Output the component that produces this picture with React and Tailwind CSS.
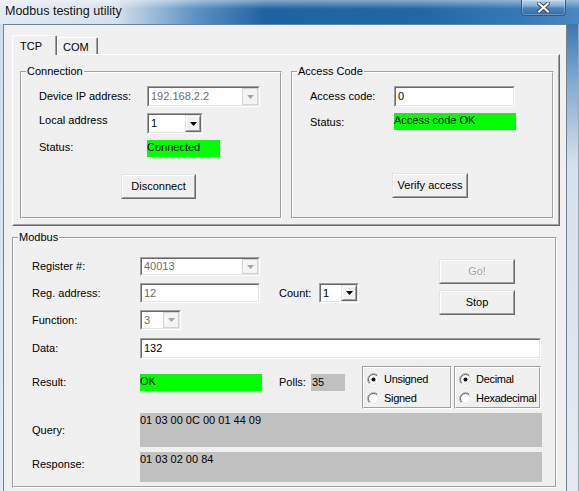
import React from "react";

const Arrow = ({ color = "#000" }) => (
  <svg width="7" height="4" viewBox="0 0 7 4">
    <path d="M0 0H7L3.5 4Z" fill={color} />
  </svg>
);

function Raised({ className = "", innerClassName = "", children }) {
  return (
    <div className={"border border-t-[#e3e3e3] border-l-[#e3e3e3] border-b-[#696969] border-r-[#696969] " + className}>
      <div className={"w-full h-full border border-t-white border-l-white border-b-[#a0a0a0] border-r-[#a0a0a0] bg-[#f0f0f0] flex items-center justify-center " + innerClassName}>
        {children}
      </div>
    </div>
  );
}

function Sunken({ className = "", innerClassName = "", children }) {
  return (
    <div className={"border border-t-[#a0a0a0] border-l-[#a0a0a0] border-b-white border-r-white " + className}>
      <div className={"w-full h-full border border-t-[#696969] border-l-[#696969] border-b-[#e3e3e3] border-r-[#e3e3e3] bg-white " + innerClassName}>
        {children}
      </div>
    </div>
  );
}

function Etched({ className = "", innerClassName = "", legend, children }) {
  return (
    <div className={"relative border border-t-[#a0a0a0] border-l-[#a0a0a0] border-b-white border-r-white " + className}>
      <div className={"w-full h-full border border-t-white border-l-white border-b-[#a0a0a0] border-r-[#a0a0a0] " + innerClassName}>
        {children}
      </div>
      {legend && (
        <span className="absolute left-[5px] top-[-7px] px-[1px] bg-[#f0f0f0] leading-[13px]">{legend}</span>
      )}
    </div>
  );
}

function Combo({ className = "", value, disabled }) {
  return (
    <Sunken className={className} innerClassName="flex">
      <div className={"flex-1 pl-[2px] flex items-center " + (disabled ? "text-[#6d6d6d]" : "text-black")}>{value}</div>
      {disabled ? (
        <div className="w-[16px] h-full border border-[#d4d4d4] bg-[#f4f4f4] flex items-center justify-center">
          <Arrow color="#a6a6a6" />
        </div>
      ) : (
        <Raised className="w-[16px] h-full">
          <Arrow />
        </Raised>
      )}
    </Sunken>
  );
}

function Edit({ className = "", value, disabled }) {
  return (
    <Sunken className={className} innerClassName={"flex items-center pl-[2px] " + (disabled ? "text-[#6d6d6d]" : "text-black")}>
      {value}
    </Sunken>
  );
}

function Radio({ checked }) {
  return (
    <svg width="13" height="13" viewBox="0 0 13 13" className="shrink-0">
      <circle cx="6.5" cy="6.5" r="4.5" fill="#fff" />
      <path d="M2.26 10.74A6 6 0 0 1 10.74 2.26" fill="none" stroke="#a0a0a0" strokeWidth="1" />
      <path d="M10.74 2.26A6 6 0 0 1 2.26 10.74" fill="none" stroke="#ffffff" strokeWidth="1" />
      <path d="M2.96 10.04A5 5 0 0 1 10.04 2.96" fill="none" stroke="#696969" strokeWidth="1" />
      <path d="M10.04 2.96A5 5 0 0 1 2.96 10.04" fill="none" stroke="#e3e3e3" strokeWidth="1" />
      {checked && <circle cx="6.5" cy="6.5" r="2" fill="#000" />}
    </svg>
  );
}

function RadioGroup({ className = "", items }) {
  return (
    <Etched className={className}>
      <div className="flex flex-col gap-[6px] pl-[3px] pt-[5px]">
        {items.map(([label, checked]) => (
          <div key={label} className="flex items-center gap-[4px] h-[13px]">
            <Radio checked={checked} />
            <span className="tracking-[-0.3px] whitespace-nowrap">{label}</span>
          </div>
        ))}
      </div>
    </Etched>
  );
}

function CloseButton() {
  return (
    <div className="mr-[13px] w-[45px] h-[16px] rounded-b-[4px] border border-t-0 border-[#365a7e] bg-[linear-gradient(180deg,#bcd6ed_0%,#8db4da_35%,#4b84bc_55%,#2f6ead_100%)] shadow-[inset_0_0_0_1px_rgba(255,255,255,0.25)] flex items-center justify-center">
      <svg width="13" height="11" viewBox="0 0 13 11">
        <path d="M2 1.5L11 9.5M11 1.5L2 9.5" stroke="#3f4a58" strokeWidth="4" strokeLinecap="square" />
        <path d="M2 1.5L11 9.5M11 1.5L2 9.5" stroke="#ffffff" strokeWidth="2" strokeLinecap="square" />
      </svg>
    </div>
  );
}

export default function App() {
  return (
    <div className="w-[579px] h-[491px] overflow-hidden font-['Liberation_Sans',Arial,sans-serif] text-[11px] leading-[13px] text-black bg-[#dfe8f1]">
      {/* title bar */}
      <div className="relative h-[24px] flex items-center bg-[linear-gradient(90deg,#e2eaf2_0%,#d3e0ec_20%,#5b90c2_34%,#1f62a1_46%,#2366a4_72%,#3579b6_90%,#4a88c0_100%)]">
        <div className="absolute inset-x-0 top-0 h-[9px] bg-[linear-gradient(180deg,rgba(255,255,255,0.45),rgba(255,255,255,0))]" />
        <span className="relative pl-[5px] pb-[2px] text-[12.5px] leading-[16px] text-[#111] [text-shadow:0_0_6px_rgba(255,255,255,0.95)]">
          Modbus testing utility
        </span>
        <div className="relative ml-auto flex self-start">
          <CloseButton />
        </div>
      </div>

      <div className="flex h-[467px]">
        <div className="w-[3px] bg-[linear-gradient(180deg,#cfdeec,#e4ebf2)]" />

        {/* client area */}
        <div className="w-[564px] border-t border-l border-r border-[#6f8398] bg-[#f0f0f0] flex flex-col">
          {/* tabs */}
          <div className="mt-[10px] ml-[8px] h-[19px] flex items-end">
            <div className="relative z-10 -mb-[1px] w-[45px] h-[20px] rounded-t-[2px] border-t border-l border-r border-t-white border-l-white border-r-[#696969] bg-[#f0f0f0]">
              <div className="h-full border-r border-r-[#a0a0a0] pl-[7px] pt-[4px]">TCP</div>
            </div>
            <div className="w-[41px] h-[17px] rounded-t-[2px] border-t border-l border-r border-t-white border-l-white border-r-[#696969] bg-[#f0f0f0]">
              <div className="h-full border-r border-r-[#a0a0a0] pl-[5px] pt-[3px]">COM</div>
            </div>
          </div>

          {/* tab page */}
          <div className="ml-[8px] w-[548px] h-[172px] border border-t-white border-l-white border-b-[#696969] border-r-[#696969]">
            <div className="w-full h-full border border-t-[#f0f0f0] border-l-[#f0f0f0] border-b-[#a0a0a0] border-r-[#a0a0a0] flex pl-[6px] pt-[15px]">
              {/* Connection */}
              <Etched className="w-[262px] h-[148px]" legend="Connection">
                <div className="flex flex-col pl-[17px] pt-[13px]">
                  <div className="flex items-center h-[21px]">
                    <span className="w-[108px]">Device IP address:</span>
                    <Combo className="w-[113px] h-[21px]" value="192.168.2.2" disabled />
                  </div>
                  <div className="flex items-start h-[21px] mt-[6px]">
                    <span className="w-[108px] pt-[1px]">Local address</span>
                    <Combo className="w-[56px] h-[21px]" value="1" />
                  </div>
                  <div className="flex items-start h-[17px] mt-[6px]">
                    <span className="w-[108px] pt-[1px]">Status:</span>
                    <div className="w-[73px] h-[17px] bg-[#00ff00] pt-[1px]">Connected</div>
                  </div>
                  <Raised className="mt-[17px] ml-[82px] w-[75px] h-[25px]">Disconnect</Raised>
                </div>
              </Etched>

              {/* Access Code */}
              <Etched className="ml-[9px] w-[263px] h-[148px]" legend="Access Code">
                <div className="flex flex-col pl-[17px] pt-[13px]">
                  <div className="flex items-center h-[21px]">
                    <span className="w-[84px]">Access code:</span>
                    <Edit className="w-[121px] h-[21px]" value="0" />
                  </div>
                  <div className="flex items-start h-[17px] mt-[6px]">
                    <span className="w-[84px] pt-[3px]">Status:</span>
                    <div className="w-[122px] h-[17px] bg-[#00ff00] pt-[1px]">Access code OK</div>
                  </div>
                  <Raised className="mt-[43px] ml-[82px] w-[76px] h-[25px]">Verify access</Raised>
                </div>
              </Etched>
            </div>
          </div>

          {/* Modbus */}
          <Etched className="mt-[11px] ml-[8px] w-[545px] h-[251px]" legend="Modbus">
            <div className="flex flex-col pl-[18px] pt-[18px]">
              <div className="flex">
                <div className="flex flex-col">
                  <div className="flex items-center h-[19px]">
                    <span className="w-[108px]">Register #:</span>
                    <Combo className="w-[120px] h-[19px]" value="40013" disabled />
                  </div>
                  <div className="flex items-center h-[20px] mt-[7px]">
                    <span className="w-[108px]">Reg. address:</span>
                    <Edit className="w-[120px] h-[20px]" value="12" disabled />
                    <span className="ml-[19px] w-[40px]">Count:</span>
                    <Combo className="w-[40px] h-[20px]" value="1" />
                  </div>
                  <div className="flex items-center h-[20px] mt-[7px]">
                    <span className="w-[108px]">Function:</span>
                    <Combo className="w-[41px] h-[20px]" value="3" disabled />
                  </div>
                </div>
                <div className="flex flex-col ml-[80px] mt-[2px]">
                  <Raised className="w-[76px] h-[25px]" innerClassName="text-[#a0a0a0] [text-shadow:1px_1px_0_#ffffff]">Go!</Raised>
                  <Raised className="mt-[6px] w-[76px] h-[25px]">Stop</Raised>
                </div>
              </div>

              <div className="flex items-center h-[21px] mt-[8px]">
                <span className="w-[108px]">Data:</span>
                <Edit className="w-[401px] h-[21px]" value="132" />
              </div>

              <div className="flex items-start h-[43px] mt-[7px]">
                <div className="flex items-center h-[17px] mt-[8px]">
                  <span className="w-[108px]">Result:</span>
                  <div className="w-[122px] h-[17px] bg-[#00ff00] pt-[1px]">OK</div>
                  <span className="ml-[17px] w-[32px]">Polls:</span>
                  <div className="w-[34px] h-[17px] bg-[#c0c0c0] pl-[1px] pt-[2px]">35</div>
                </div>
                <RadioGroup className="ml-[17px] w-[90px] h-[43px]" items={[["Unsigned", true], ["Signed", false]]} />
                <RadioGroup className="ml-[2px] w-[87px] h-[43px]" items={[["Decimal", true], ["Hexadecimal", false]]} />
              </div>

              <div className="flex items-start mt-[4px]">
                <span className="w-[108px] pt-[11px]">Query:</span>
                <div className="w-[402px] h-[34px] bg-[#c0c0c0] pt-[1px]">01 03 00 0C 00 01 44 09</div>
              </div>

              <div className="flex items-start mt-[5px]">
                <span className="w-[108px] pt-[6px]">Response:</span>
                <div className="w-[402px] h-[30px] bg-[#c0c0c0] pt-[1px]">01 03 02 00 84</div>
              </div>
            </div>
          </Etched>
        </div>

        <div className="w-[12px] bg-[linear-gradient(180deg,#3b77b1_0%,#7fa9d0_12%,#d5e1eb_30%,#e6eaee_100%)] border-r border-r-[#9aa7b4]" />
      </div>
    </div>
  );
}
